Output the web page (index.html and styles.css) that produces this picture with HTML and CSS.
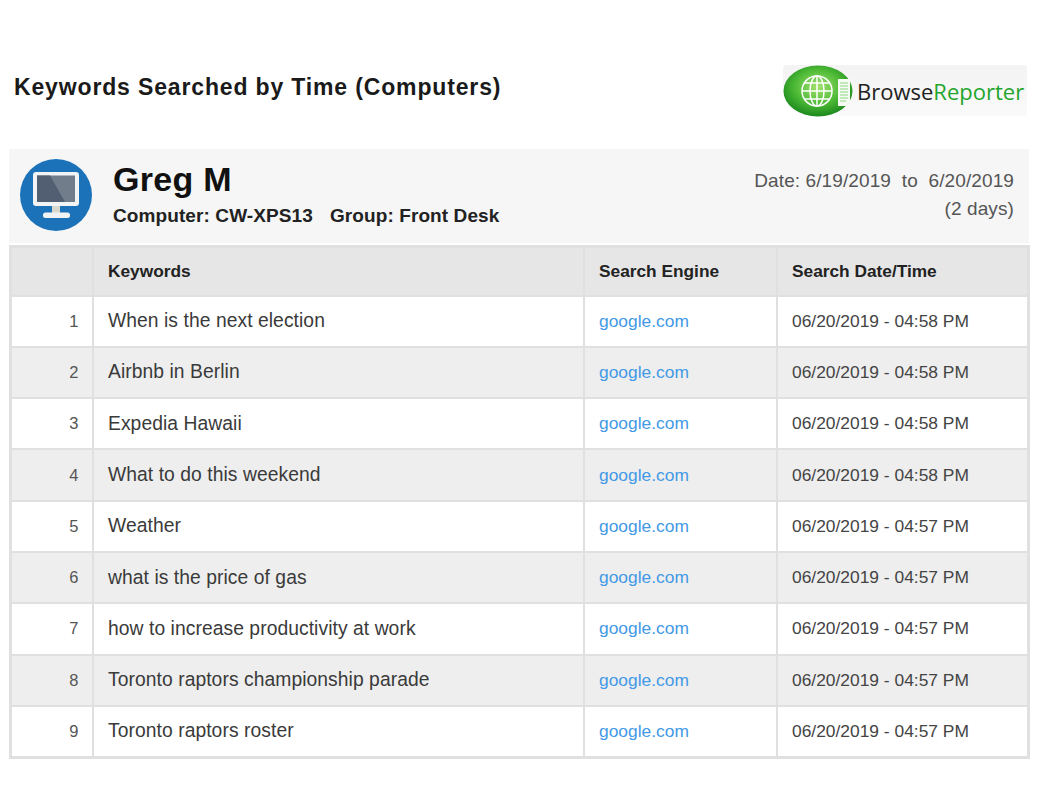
FILE: index.html
```html
<!DOCTYPE html>
<html lang="en">
<head>
<meta charset="utf-8">
<title>Keywords Searched by Time (Computers)</title>
<link rel="stylesheet" href="styles.css">
</head>
<body>
<header class="top">
  <h1 class="title">Keywords Searched by Time (Computers)</h1>
  <div class="logo">
    <svg class="logo-mark" width="76" height="52" viewBox="0 0 76 52">
      <defs>
        <radialGradient id="lg" cx="0.5" cy="0.42" r="0.62">
          <stop offset="0" stop-color="#a4e26f"/>
          <stop offset="0.55" stop-color="#4cb935"/>
          <stop offset="1" stop-color="#128019"/>
        </radialGradient>
      </defs>
      <ellipse cx="35" cy="26" rx="34.5" ry="25.5" fill="url(#lg)"/>
      <g fill="none" stroke="#fff" stroke-width="1.5">
        <circle cx="34" cy="26" r="15"/>
        <ellipse cx="34" cy="26" rx="7" ry="15"/>
        <path d="M34 11v30M19 26h30M21.5 18h25M21.5 34h25"/>
      </g>
      <path d="M55 14h12v24l-3 3H55z" fill="#f4fbf2"/>
      <path d="M57 18h8M57 21h8M57 24h8M57 27h8M57 30h8M57 33h8M57 36h6" stroke="#8fd685" stroke-width="1.2"/>
    </svg>
    <span class="logo-text">Browse<span class="logo-green">Reporter</span></span>
  </div>
</header>
<section class="info">
  <svg class="avatar" width="72" height="72" viewBox="0 0 72 72">
    <circle cx="36" cy="36" r="36" fill="#1c72b8"/>
    <rect x="13" y="13" width="46" height="34" rx="3" fill="#f1f3f4"/>
    <rect x="17" y="16.500" width="38" height="26.500" fill="#717d8b"/>
    <path d="M17 16.500h13l15 26.500H17z" fill="#525f72"/>
    <rect x="32" y="47" width="8" height="7" fill="#d9d8cc"/>
    <rect x="23" y="53.500" width="27" height="5.500" rx="2.500" fill="#f1f3f4"/>
  </svg>
  <div class="who">
    <div class="name">Greg M</div>
    <div class="meta"><span>Computer: CW-XPS13</span><span>Group: Front Desk</span></div>
  </div>
  <div class="dates">
    <div>Date: 6/19/2019 &nbsp;to &nbsp;6/20/2019</div>
    <div>(2 days)</div>
  </div>
</section>
<table class="report">
  <colgroup><col class="c-num"><col class="c-key"><col class="c-eng"><col class="c-date"></colgroup>
  <thead>
    <tr><th></th><th>Keywords</th><th>Search Engine</th><th>Search Date/Time</th></tr>
  </thead>
  <tbody>
    <tr><td class="num">1</td><td class="key">When is the next election</td><td class="eng">google.com</td><td>06/20/2019 - 04:58 PM</td></tr>
    <tr><td class="num">2</td><td class="key">Airbnb in Berlin</td><td class="eng">google.com</td><td>06/20/2019 - 04:58 PM</td></tr>
    <tr><td class="num">3</td><td class="key">Expedia Hawaii</td><td class="eng">google.com</td><td>06/20/2019 - 04:58 PM</td></tr>
    <tr><td class="num">4</td><td class="key">What to do this weekend</td><td class="eng">google.com</td><td>06/20/2019 - 04:58 PM</td></tr>
    <tr><td class="num">5</td><td class="key">Weather</td><td class="eng">google.com</td><td>06/20/2019 - 04:57 PM</td></tr>
    <tr><td class="num">6</td><td class="key">what is the price of gas</td><td class="eng">google.com</td><td>06/20/2019 - 04:57 PM</td></tr>
    <tr><td class="num">7</td><td class="key">how to increase productivity at work</td><td class="eng">google.com</td><td>06/20/2019 - 04:57 PM</td></tr>
    <tr><td class="num">8</td><td class="key">Toronto raptors championship parade</td><td class="eng">google.com</td><td>06/20/2019 - 04:57 PM</td></tr>
    <tr><td class="num">9</td><td class="key">Toronto raptors roster</td><td class="eng">google.com</td><td>06/20/2019 - 04:57 PM</td></tr>
  </tbody>
</table>
</body>
</html>
```
FILE: styles.css
```css
* { box-sizing: border-box; }
html, body { margin: 0; background: #fff; }
body {
  width: 1042px;
  height: 806px;
  overflow: hidden;
  font-family: "Liberation Sans", Arial, sans-serif;
  color: #333;
}
.top {
  height: 149px;
  padding: 65px 15px 0 14px;
  display: flex;
  justify-content: space-between;
  align-items: flex-start;
}
.title {
  margin: 8px 0 0;
  font-size: 23px;
  line-height: 28px;
  font-weight: 700;
  letter-spacing: 0.85px;
  color: #1a1a1a;
}
.logo {
  width: 244px;
  height: 51px;
  display: flex;
  align-items: center;
  background: linear-gradient(#f3f3f3, #fafafa);
  border-radius: 4px 3px 3px 26px;
}
.logo-mark { flex: none; margin-right: -2px; }
.logo-text {
  font-family: "Open Sans", sans-serif;
  font-size: 22px;
  line-height: 30px;
  color: #222;
  white-space: nowrap;
}
.logo-green { color: #1fa52c; }
.info {
  margin: 0 13px 0 9px;
  height: 94px;
  background: #f6f6f6;
  display: flex;
  padding: 10px 15px 0 11px;
}
.avatar { flex: none; margin-right: 21px; }
.who { flex: 1; }
.name {
  font-size: 34px;
  line-height: 40px;
  font-weight: 700;
  color: #111;
  letter-spacing: 0.3px;
}
.meta {
  margin-top: 6px;
  font-size: 19px;
  line-height: 22px;
  font-weight: 700;
  color: #222;
  letter-spacing: 0.1px;
  display: flex;
  gap: 17px;
}
.dates {
  padding-top: 8px;
  text-align: right;
  font-size: 19px;
  line-height: 28px;
  letter-spacing: 0.1px;
  color: #555;
}
.report {
  margin: 2px 0 0 9px;
  width: 1021px;
  height: 512px;
  table-layout: fixed;
  border-collapse: collapse;
  border: 3px solid #e0e0e0;
}
.c-num { width: 82px; }
.c-key { width: 491px; }
.c-eng { width: 193px; }
.report th, .report td {
  border: 2px solid #e0e0e0;
  padding: 0 0 0 14.500px;
  text-align: left;
  vertical-align: middle;
  white-space: nowrap;
}
.report th {
  height: 49px;
  background: #e6e6e6;
  font-size: 17.300px;
  font-weight: 700;
  color: #222;
}
.report td {
  height: 51.300px;
  font-size: 17.400px;
  color: #444;
  background: #fff;
}
.report tbody tr:nth-child(even) td { background: #eee; }
.report td.num {
  padding: 0 13px 0 0;
  text-align: right;
  font-size: 16.500px;
  color: #555;
}
.report td.key { font-size: 19.300px; letter-spacing: 0.06px; color: #3a3a3a; }
.report td.eng { color: #4299e6; }
```
